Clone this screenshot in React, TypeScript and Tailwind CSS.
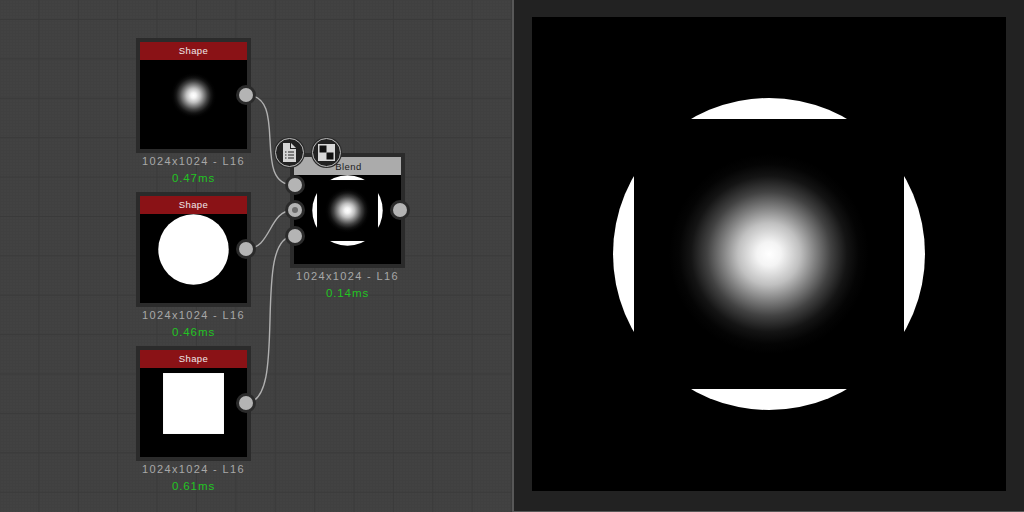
import React from "react";

type Kind = "blob" | "circle" | "square" | "blend";

// Preview image, drawn in the 474px space of the big viewer
const Preview = ({ kind, id }: { kind: Kind; id: string }) => (
  <svg viewBox="0 0 474 474" className="block w-full h-full bg-black">
    <defs>
      <radialGradient id={id} cx="50%" cy="50%" r="50%">
        <stop offset="0%" stopColor="#fff" />
        <stop offset="12%" stopColor="#f4f4f4" />
        <stop offset="31%" stopColor="#c0c0c0" />
        <stop offset="46%" stopColor="#828282" />
        <stop offset="62%" stopColor="#424242" />
        <stop offset="78%" stopColor="#141414" />
        <stop offset="90%" stopColor="#040404" />
        <stop offset="100%" stopColor="#000" />
      </radialGradient>
    </defs>
    {(kind === "circle" || kind === "blend") && <circle cx="237" cy="237" r="156" fill="#fff" />}
    {kind === "square" && <rect x="102" y="102" width="270" height="270" fill="#fff" />}
    {kind === "blend" && <rect x="102" y="102" width="270" height="270" fill="#000" />}
    {(kind === "blob" || kind === "blend") && <circle cx="237" cy="237" r="100" fill={`url(#${id})`} />}
  </svg>
);

const Pin = ({ className, active }: { className: string; active?: boolean }) => (
  <div
    className={`absolute w-5 h-5 rounded-full bg-[#2b2b2b] flex items-center justify-center ${className}`}
  >
    <div className="w-[14px] h-[14px] rounded-full bg-[#b4b4b4] flex items-center justify-center">
      {active && <div className="w-[6px] h-[6px] rounded-full bg-[#6e6e6e]" />}
    </div>
  </div>
);

const Node = ({
  className,
  title,
  time,
  kind,
  id,
  blend,
}: {
  className: string;
  title: string;
  time: string;
  kind: Kind;
  id: string;
  blend?: boolean;
}) => (
  <div className={`absolute w-[115px] ${className}`}>
    <div className="relative w-[115px] h-[115px] bg-[#2b2b2b] p-[4px]">
      <Preview kind={kind} id={id} />
      <div
        className={`absolute left-[4px] right-[4px] top-[4px] h-[18px] flex items-center justify-center text-[9.5px] tracking-[0.4px] ${
          blend ? "bg-[#ababab] text-[#1c1c1c] pt-[2px] pl-[2px]" : "bg-[#8a1216] text-[#f0e8e8]"
        }`}
      >
        {title}
      </div>
      <Pin className="right-[-5px] top-[47px]" />
    </div>
    <div className="mt-[1px] h-[14px] leading-[14px] text-center text-[11px] tracking-[1.35px] text-[#a8a8a8] whitespace-nowrap">
      1024x1024 - L16
    </div>
    <div className="mt-[3px] h-[14px] leading-[14px] text-center text-[11.5px] tracking-[0.9px] text-[#22c422]">
      {time}
    </div>
  </div>
);

const DocIcon = () => (
  <svg viewBox="0 0 13 19" className="w-[13px] h-[19px]">
    <path d="M0 0h7v6h6v13H0z" fill="#d4d4d4" />
    <path d="M8 0l5 5H8z" fill="#d4d4d4" />
    <path d="M2 9h1.5M5 9h6M2 12h1.5M5 12h6M2 15h1.5M5 15h6" stroke="#222" strokeWidth="1.2" />
  </svg>
);

const CheckerIcon = () => (
  <svg viewBox="0 0 17 17" className="w-[17px] h-[17px]">
    <rect width="17" height="17" fill="#d8d8d8" />
    <rect x="1.5" y="1.5" width="7" height="7" fill="#111" />
    <rect x="8.5" y="8.5" width="7" height="7" fill="#111" />
  </svg>
);

const RoundButton = ({ className, children }: { className: string; children: React.ReactNode }) => (
  <div
    className={`absolute w-[29px] h-[29px] rounded-full bg-[#222] border-[1.5px] border-[#bdbdbd] ring-1 ring-[#2b2b2b] flex items-center justify-center ${className}`}
  >
    {children}
  </div>
);

export default function App() {
  return (
    <div className="flex w-[1024px] h-[512px] overflow-hidden font-['Liberation_Sans',sans-serif]">
      {/* Node graph */}
      <div className="relative w-[512px] h-full bg-[#424242] bg-[linear-gradient(#3a3a3a_1px,transparent_1px),linear-gradient(90deg,#3a3a3a_1px,transparent_1px),linear-gradient(#404040_1px,transparent_1px),linear-gradient(90deg,#404040_1px,transparent_1px)] bg-[size:39.4px_39.4px,39.4px_39.4px,3px_3px,3px_3px] bg-[position:-1px_19px,-1px_19px,0_0,0_0]">
        <svg className="absolute inset-0" width="512" height="512" fill="none" stroke="#b0b0b0" strokeWidth="1.4">
          <path d="M246 95C290 95 250 185 294 185" />
          <path d="M246 249C272 249 268 210 294 210" />
          <path d="M246 403C290 403 250 236 294 236" />
        </svg>
        <Node className="left-[136px] top-[38px]" title="Shape" time="0.47ms" kind="blob" id="g1" />
        <Node className="left-[136px] top-[192px]" title="Shape" time="0.46ms" kind="circle" id="g2" />
        <Node className="left-[136px] top-[346px]" title="Shape" time="0.61ms" kind="square" id="g3" />
        <Node className="left-[290px] top-[153px]" title="Blend" time="0.14ms" kind="blend" id="g4" blend />
        <Pin className="left-[285px] top-[175px]" />
        <Pin className="left-[285px] top-[200px]" active />
        <Pin className="left-[285px] top-[226px]" />
        <RoundButton className="left-[275px] top-[138px]">
          <DocIcon />
        </RoundButton>
        <RoundButton className="left-[312px] top-[138px]">
          <CheckerIcon />
        </RoundButton>
      </div>
      {/* Viewer */}
      <div className="flex-1 h-full flex flex-col border-l-2 border-[#585858] bg-[#222]">
        <div className="flex-1 flex justify-center pt-[17px]">
          <div className="w-[474px] h-[474px]">
            <Preview kind="blend" id="g5" />
          </div>
        </div>
        <div className="h-[1px] bg-[#585858]" />
      </div>
    </div>
  );
}
